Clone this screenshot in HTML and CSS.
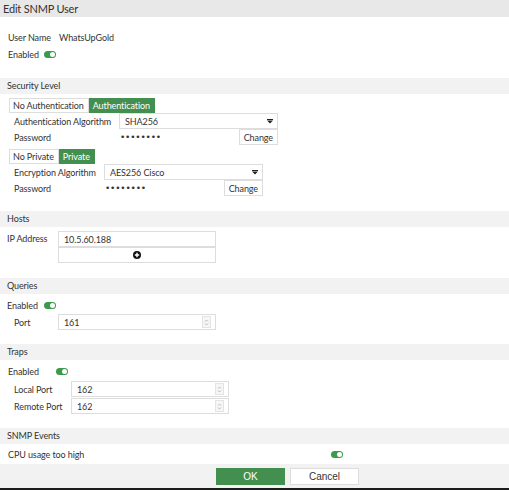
FILE: index.html
```html
<!DOCTYPE html>
<html lang="en">
<head>
    <meta charset="UTF-8">
    <title>Edit SNMP User</title>
    <link rel="stylesheet" href="styles.css">
</head>
<body>
    <div class="dialog">
        <div class="title">Edit SNMP User</div>

        <div class="content">
            <div class="intro">
                <div class="row">
                    <span class="user-label">User Name</span>
                    <span>WhatsUpGold</span>
                </div>
                <div class="row">
                    <span>Enabled</span>
                    <span class="toggle intro-toggle"></span>
                </div>
            </div>

            <div class="section-bar first">Security Level</div>
            <div class="security">
                <div class="tabs">
                    <span class="tab">No Authentication</span>
                    <span class="tab active">Authentication</span>
                </div>
                <div class="sub-row">
                    <span class="auth-label">Authentication Algorithm</span>
                    <div class="select auth-select">
                        <span>SHA256</span>
                        <svg class="caret" width="6" height="5" viewBox="0 0 6 5"><rect x="0" y="0" width="6" height="1" fill="#222"/><path d="M0 1.5 H6 L3 4.5 Z" fill="#222"/></svg>
                    </div>
                </div>
                <div class="sub-row pw-row auth-pw">
                    <span class="auth-label">Password</span>
                    <span class="dots">&bull;&bull;&bull;&bull;&bull;&bull;&bull;&bull;</span>
                    <button class="change">Change</button>
                </div>

                <div class="tabs second">
                    <span class="tab">No Private</span>
                    <span class="tab active">Private</span>
                </div>
                <div class="sub-row">
                    <span class="enc-label">Encryption Algorithm</span>
                    <div class="select enc-select">
                        <span>AES256 Cisco</span>
                        <svg class="caret" width="6" height="5" viewBox="0 0 6 5"><rect x="0" y="0" width="6" height="1" fill="#222"/><path d="M0 1.5 H6 L3 4.5 Z" fill="#222"/></svg>
                    </div>
                </div>
                <div class="sub-row pw-row enc-pw">
                    <span class="enc-label">Password</span>
                    <span class="dots">&bull;&bull;&bull;&bull;&bull;&bull;&bull;&bull;</span>
                    <button class="change">Change</button>
                </div>
            </div>

            <div class="section-bar">Hosts</div>
            <div class="hosts">
                <div class="host-row">
                    <span class="host-label">IP Address</span>
                    <div class="host-fields">
                        <div class="field">10.5.60.188</div>
                        <div class="field add">
                            <svg width="8" height="8" viewBox="0 0 8 8"><circle cx="4" cy="4" r="4" fill="#111"/><path d="M4 1.8 V6.2 M1.8 4 H6.2" stroke="#fff" stroke-width="1.4"/></svg>
                        </div>
                    </div>
                </div>
            </div>

            <div class="section-bar">Queries</div>
            <div class="queries">
                <div class="row">
                    <span>Enabled</span>
                    <span class="toggle query-toggle"></span>
                </div>
                <div class="port-row">
                    <span class="port-label">Port</span>
                    <div class="field number">
                        <span>161</span>
                        <span class="spin"><svg width="5" height="9" viewBox="0 0 5 9"><path d="M1 3.5 L2.5 2 L4 3.5 M1 5.5 L2.5 7 L4 5.5" stroke="#aaa" stroke-width="0.8" fill="none"/></svg></span>
                    </div>
                </div>
            </div>

            <div class="section-bar traps-bar">Traps</div>
            <div class="traps">
                <div class="row">
                    <span>Enabled</span>
                    <span class="toggle trap-toggle"></span>
                </div>
                <div class="port-row trap-port">
                    <span class="trap-label">Local Port</span>
                    <div class="field number">
                        <span>162</span>
                        <span class="spin"><svg width="5" height="9" viewBox="0 0 5 9"><path d="M1 3.5 L2.5 2 L4 3.5 M1 5.5 L2.5 7 L4 5.5" stroke="#aaa" stroke-width="0.8" fill="none"/></svg></span>
                    </div>
                </div>
                <div class="port-row trap-port">
                    <span class="trap-label">Remote Port</span>
                    <div class="field number">
                        <span>162</span>
                        <span class="spin"><svg width="5" height="9" viewBox="0 0 5 9"><path d="M1 3.5 L2.5 2 L4 3.5 M1 5.5 L2.5 7 L4 5.5" stroke="#aaa" stroke-width="0.8" fill="none"/></svg></span>
                    </div>
                </div>
            </div>

            <div class="section-bar events-bar">SNMP Events</div>
            <div class="events">
                <div class="row">
                    <span class="event-label">CPU usage too high</span>
                    <span class="toggle"></span>
                </div>
            </div>
        </div>

        <div class="footer">
            <button class="btn ok">OK</button>
            <button class="btn cancel">Cancel</button>
        </div>
    </div>
</body>
</html>
```

FILE: styles.css
```css
* {
    box-sizing: border-box;
    margin: 0;
    padding: 0;
}

body {
    font-family: Lato, "Noto Sans", sans-serif;
    font-size: 9px;
    letter-spacing: -0.1px;
    color: #333;
    background: #1c1c1c;
}

.dialog {
    width: 509px;
    height: 488px;
    background: #fff;
    display: flex;
    flex-direction: column;
}

.title {
    height: 17px;
    line-height: 17px;
    padding-left: 3px;
    font-size: 11px;
    letter-spacing: -0.2px;
    background: #e8e8e8;
}

.content {
    flex: 1;
    overflow: hidden;
}

.row {
    display: flex;
    align-items: center;
    height: 17px;
    white-space: nowrap;
}

.intro {
    padding: 12px 0 0 8px;
}

.user-label {
    width: 51px;
}

.toggle {
    position: relative;
    display: inline-block;
    width: 12px;
    height: 7px;
    border-radius: 4px;
    background: #3b9b4b;
    margin-left: 5px;
}

.toggle::after {
    content: "";
    position: absolute;
    right: 1px;
    top: 1px;
    width: 5px;
    height: 5px;
    border-radius: 50%;
    background: #fff;
}

.section-bar {
    height: 16px;
    line-height: 16px;
    padding-left: 7px;
    background: #f2f2f2;
    margin-top: 15px;
}

.traps-bar, .events-bar {
    margin-top: 14px;
}

/* security level */
.security {
    padding: 4px 0 0 9px;
}

.tabs {
    display: flex;
    height: 15px;
    white-space: nowrap;
}

.tabs.second {
    margin-top: 4px;
}

.tab {
    line-height: 13px;
    padding: 0 4px 0 3px;
    border: 1px solid #ddd;
    background: #fff;
}

.tab.active {
    background: #438f4f;
    border-color: #438f4f;
    color: #fff;
}

.sub-row {
    display: flex;
    align-items: center;
    height: 16px;
    padding-left: 5px;
    white-space: nowrap;
}

.auth-label {
    width: 105px;
}

.enc-label {
    width: 90px;
}

.select {
    display: flex;
    align-items: center;
    justify-content: space-between;
    width: 159px;
    height: 16px;
    padding: 0 4px 0 5px;
    border: 1px solid #ddd;
}

.dots {
    letter-spacing: -0.2px;
    font-family: "DejaVu Sans", sans-serif;
    font-size: 9px;
    margin-left: 1px;
}

.change {
    margin-left: auto;
    height: 16px;
    padding: 0 4px;
    font-family: inherit;
    font-size: 9px;
    letter-spacing: -0.1px;
    color: #333;
    background: #fff;
    border: 1px solid #ddd;
}

.auth-pw {
    width: 269px;
}

.enc-pw {
    width: 254px;
}

/* hosts */
.hosts {
    padding: 4px 0 0 7px;
}

.host-row {
    display: flex;
    white-space: nowrap;
}

.host-label {
    width: 51px;
    line-height: 16px;
}

.field {
    display: flex;
    align-items: center;
    width: 158px;
    height: 16px;
    padding-left: 5px;
    border: 1px solid #ddd;
    background: #fff;
}

.field.add {
    justify-content: center;
    padding-left: 0;
}

/* queries and traps */
.queries, .traps {
    padding: 3px 0 0 8px;
}

.queries .row {
    margin-left: -1px;
}

.query-toggle {
    margin-left: 6px;
}

.trap-toggle {
    margin-left: 17px;
}

.port-row {
    display: flex;
    align-items: center;
    padding-left: 6px;
    white-space: nowrap;
}

.port-label {
    width: 44px;
}

.trap-label {
    width: 57px;
}

.trap-port {
    margin-top: 1px;
}

.number {
    justify-content: space-between;
    padding-right: 4px;
}

.spin {
    display: flex;
    align-items: center;
    justify-content: center;
    width: 9px;
    height: 12px;
    border: 1px solid #e4e4e4;
    background: #f6f6f6;
}

/* events */
.events {
    padding: 2px 0 0 8px;
}

.event-label {
    width: 318px;
}

/* footer */
.footer {
    height: 24px;
    background: #f2f2f2;
    display: flex;
    padding: 4px 0 0 216px;
    gap: 5px;
}

.btn {
    width: 69px;
    height: 17px;
    font-family: "Liberation Sans", Arial, sans-serif;
    font-size: 10px;
    cursor: pointer;
}

.ok {
    background: #438f4f;
    color: #fff;
    border: 1px solid #438f4f;
}

.cancel {
    background: #fff;
    color: #333;
    border: 1px solid #ddd;
}
```
